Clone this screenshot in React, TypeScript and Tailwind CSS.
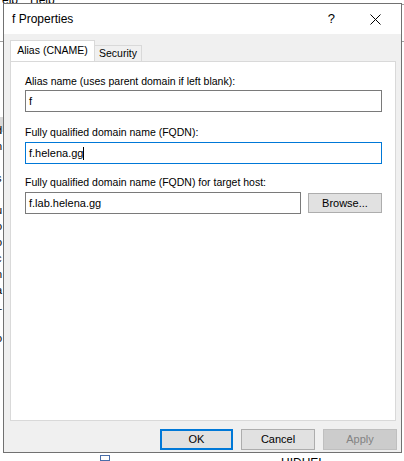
import React from "react";

export default function App() {
  const ui = { fontFamily: '"Liberation Sans", Arial, sans-serif' };
  return (
    <div className="relative w-[404px] h-[461px] overflow-hidden bg-white" style={ui}>
      {/* background window fragments */}
      <div className="absolute left-[2px] top-[-9px] text-[12px] text-black">elp</div>
      <div className="absolute left-[30px] top-[-9px] text-[12px] text-black">Help</div>
      <div className="absolute left-0 top-[41px] w-[4px] h-px bg-[#a0a0a0]" />
      <div className="absolute right-0 top-[41px] w-[3px] h-px bg-[#a0a0a0]" />
      <div className="absolute right-0 top-[4px] w-[3px] h-px bg-[#a0a0a0]" />
      <div className="absolute left-0 top-[117px] w-[3px] h-[15px] bg-[#d9d9d9]" />
      <div className="absolute left-[-4px] top-[122px] flex flex-col text-[11px] leading-[16px] text-black">
        <span>d</span>
        <span>n</span>
        <span>r</span>
        <span>s</span>
        <span>t</span>
        <span>u</span>
        <span>o</span>
        <span>o</span>
        <span>c</span>
        <span>n</span>
        <span>a</span>
        <span>L</span>
        <span>i</span>
        <span>o</span>
      </div>
      <div className="absolute left-[281px] top-[454px] text-[12px] text-black">HIDHEI</div>
      <div className="absolute left-[100px] top-[455px] w-[10px] h-[6px] border border-[#4a6ea9]" />

      {/* dialog */}
      <div className="absolute left-[3px] top-[3px] w-[399px] h-[450px] border border-[#717171] bg-[#f0f0f0] flex flex-col">
        <div className="h-[30px] bg-white flex items-center shrink-0">
          <span className="ml-[8px] text-[12px] text-black">f Properties</span>
          <span className="ml-auto text-[13px] text-black mr-[35px]">?</span>
          <svg width="11" height="11" viewBox="0 0 11 11" className="mr-[20px]">
            <path d="M0.5 0.5 L10.5 10.5 M10.5 0.5 L0.5 10.5" stroke="#000" strokeWidth="1" />
          </svg>
        </div>
        <div className="flex-1 flex flex-col pl-[6px] pt-[7px]">
          {/* tabs */}
          <div className="flex items-end h-[20px] relative z-10">
            <div className="h-[21px] w-[85px] bg-white border border-b-0 border-[#d9d9d9] flex items-center justify-center text-[10.5px] text-black pb-[1px]">
              Alias (CNAME)
            </div>
            <div className="h-[16px] w-[47px] bg-[#f0f0f0] border border-l-0 border-b-0 border-[#d9d9d9] flex items-center justify-center text-[10.5px] text-black">
              Security
            </div>
          </div>
          <div className="w-[386px] h-[360px] bg-white border border-[#d9d9d9] pl-[14px] pt-[13px] flex flex-col">
            <div className="text-[10.5px] leading-[13px] text-black">Alias name (uses parent domain if left blank):</div>
            <div className="mt-[2px] w-[357px] h-[22px] border border-[#7a7a7a] flex items-center pl-[3px] text-[11px] text-black">f</div>
            <div className="mt-[14px] text-[10.5px] leading-[13px] text-black">Fully qualified domain name (FQDN):</div>
            <div className="mt-[3px] w-[357px] h-[22px] border border-[#0078d7] flex items-center pl-[3px] text-[11px] text-black">
              f.helena.gg<span className="w-px h-[13px] bg-black" />
            </div>
            <div className="mt-[12px] text-[10.5px] leading-[13px] text-black">Fully qualified domain name (FQDN) for target host:</div>
            <div className="mt-[3px] flex items-center">
              <div className="w-[276px] h-[22px] border border-[#7a7a7a] flex items-center pl-[3px] text-[11px] text-black">f.lab.helena.gg</div>
              <div className="ml-[7px] w-[74px] h-[20px] border border-[#adadad] bg-[#e1e1e1] flex items-center justify-center text-[11px] text-black">Browse...</div>
            </div>
          </div>
          {/* buttons */}
          <div className="flex mt-[8px] ml-[150px] gap-[8px]">
            <div className="w-[73px] h-[21px] border-2 border-[#0078d7] bg-[#e1e1e1] flex items-center justify-center text-[11px] text-black">OK</div>
            <div className="w-[74px] h-[21px] border border-[#adadad] bg-[#e1e1e1] flex items-center justify-center text-[11px] text-black">Cancel</div>
            <div className="w-[74px] h-[21px] border border-[#bfbfbf] bg-[#cccccc] flex items-center justify-center text-[11px] text-[#838383]">Apply</div>
          </div>
        </div>
      </div>
    </div>
  );
}
